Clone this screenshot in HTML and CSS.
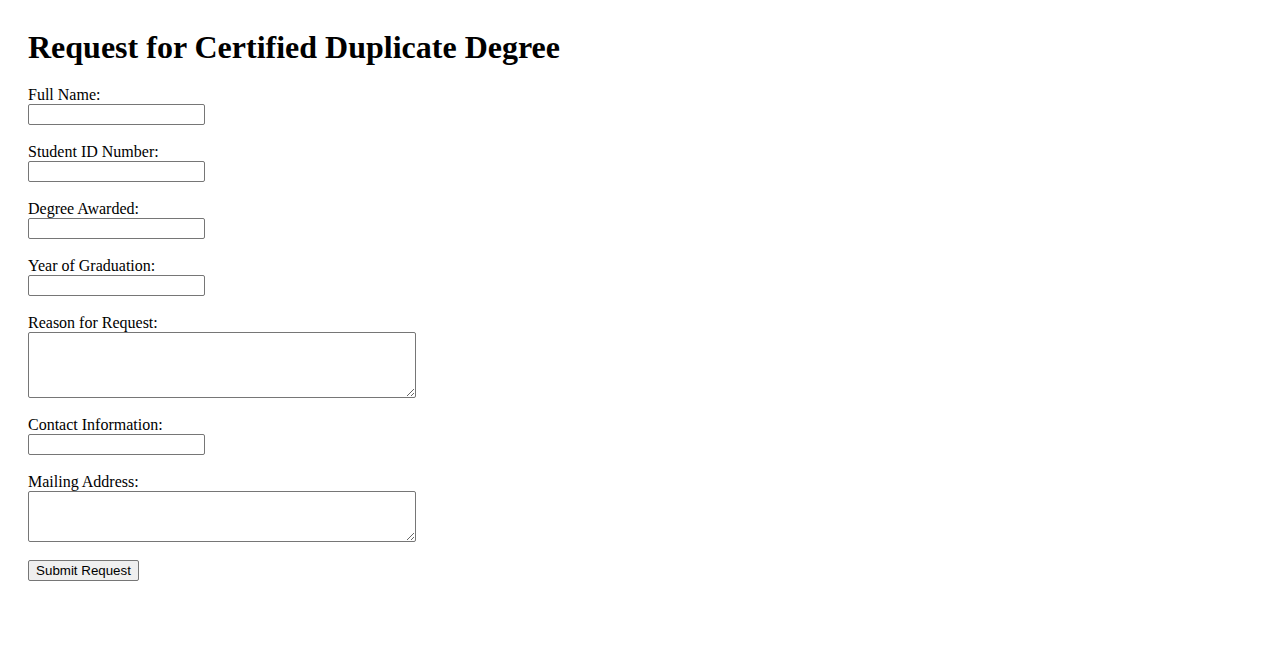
FILE: index.html
```html
<!DOCTYPE html>
<html lang="en">
<head>
<meta charset="utf-8">
<title>Request for Certified Duplicate Degree</title>
<link rel="stylesheet" href="styles.css">
</head>
<body>
<div class="page">
  <h1 class="title">Request for Certified Duplicate Degree</h1>
  <form class="form">
    <div class="field">
      <label for="name">Full Name:</label>
      <input class="text-input" type="text" id="name">
    </div>
    <div class="field">
      <label for="sid">Student ID Number:</label>
      <input class="text-input" type="text" id="sid">
    </div>
    <div class="field">
      <label for="degree">Degree Awarded:</label>
      <input class="text-input" type="text" id="degree">
    </div>
    <div class="field">
      <label for="year">Year of Graduation:</label>
      <input class="text-input" type="text" id="year">
    </div>
    <div class="field">
      <label for="reason">Reason for Request:</label>
      <textarea class="area area-lg" id="reason"></textarea>
    </div>
    <div class="field">
      <label for="contact">Contact Information:</label>
      <input class="text-input" type="text" id="contact">
    </div>
    <div class="field">
      <label for="address">Mailing Address:</label>
      <textarea class="area area-sm" id="address"></textarea>
    </div>
    <button class="submit" type="button">Submit Request</button>
  </form>
</div>
</body>
</html>
```
FILE: styles.css
```css
html, body {
  background: #ffffff;
}
body {
  margin: 8px;
  font-family: "Liberation Serif", "Times New Roman", serif;
  font-size: 16px;
  color: #000000;
}
.page {
  padding: 20px;
}
.title {
  font-size: 32px;
  font-weight: bold;
  line-height: 37px;
  padding-top: 1px;
  margin: 0 0 20.44px 0;
}
.form {
  display: flex;
  flex-direction: column;
  align-items: flex-start;
}
.field {
  display: flex;
  flex-direction: column;
  align-items: flex-start;
  margin-bottom: 18px;
}
.field label {
  line-height: 18px;
}
.text-input {
  width: 177px;
  height: 21px;
  box-sizing: border-box;
  margin: 0;
  padding: 1px 2px;
  border: 1px solid #767676;
  border-radius: 2px;
  background: #ffffff;
  font-family: "Liberation Sans", Arial, sans-serif;
  font-size: 13.333px;
}
.area {
  width: 388px;
  box-sizing: border-box;
  margin: 0;
  padding: 2px;
  border: 1px solid #767676;
  border-radius: 2px;
  background: #ffffff;
  font-family: "Liberation Mono", monospace;
  font-size: 13.333px;
}
.area-lg {
  height: 66px;
}
.area-sm {
  height: 51px;
}
.submit {
  width: 111px;
  height: 21px;
  box-sizing: border-box;
  margin: 0;
  padding: 1px 6px;
  border: 1px solid #767676;
  border-radius: 2px;
  background: #efefef;
  color: #000000;
  font-family: "Liberation Sans", Arial, sans-serif;
  font-size: 13.333px;
  line-height: 17px;
  text-align: center;
}
```
